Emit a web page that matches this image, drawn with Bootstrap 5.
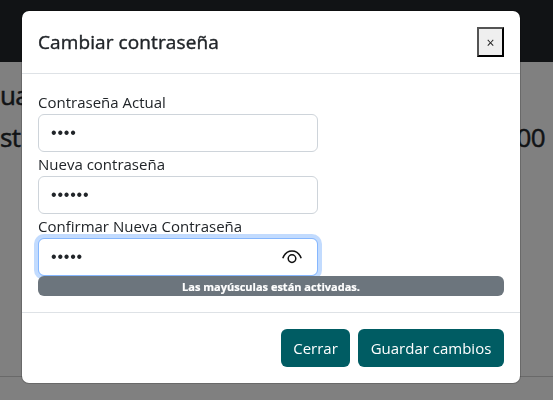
<!DOCTYPE html>
<html lang="es">
<head>
<meta charset="utf-8">
<meta name="viewport" content="width=device-width, initial-scale=1">
<title>Cambiar contraseña</title>
<link href="https://cdn.jsdelivr.net/npm/bootstrap@5.3.0/dist/css/bootstrap.min.css" rel="stylesheet">
<style>
body{font-family:"Open Sans","Noto Sans",sans-serif;height:400px;overflow:hidden;background:#808080}
.topbar{height:62px;background:#111315}
.page-text{height:314px;padding:12px 8px 0 0}
.page-line{height:42px;font-size:26px;line-height:42px;font-weight:500;color:#111315;letter-spacing:-.6px;-webkit-text-stroke:.5px #111315}
.page-rule{height:1px;background:#696969}
.modal-dialog.pw-dialog{width:500px;max-width:500px;margin:10px 0 0 21px}
.modal-content{border-radius:8px}
.pw-title{font-size:19px;line-height:30px;font-weight:500;letter-spacing:.1px;-webkit-text-stroke:.4px #212529}
.close-box{width:27px;height:30px;padding:2px 0 0;border:2px outset #000;background:#efefef;color:#222;font-size:14px;line-height:24px}
.pw-label{font-size:15px;line-height:24px;font-weight:400}
.pw-field{width:280px}
.pw-field .form-control{height:38px;border-color:#ced4da;font-family:"Liberation Sans",sans-serif;font-size:16px;letter-spacing:.8px}
.pw-field.pw-active .form-control{border-color:#86b7fe;box-shadow:0 0 0 4px rgba(13,110,253,.25)}
.eye{right:15px;top:10px;width:22px;height:18px}
.caps{position:relative;height:20px;border-radius:6px;font-size:11px;line-height:22px;padding:0;font-weight:700;-webkit-text-stroke:.2px #fff}
.btn-teal,.btn-teal:hover{height:38px;padding:6px 0;background:#005c63;color:#fff;font-size:15px;border-radius:6px}
.b1{width:69px}.b2{width:146px}
</style>
<script src="https://cdn.jsdelivr.net/npm/bootstrap@5.3.0/dist/js/bootstrap.bundle.min.js"></script>
</head>
<body>
<div class="topbar"></div>
<div class="page-text">
 <div class="page-line"><span>ua</span></div>
 <div class="page-line d-flex justify-content-between"><span>st</span><span>00</span></div>
</div>
<div class="page-rule"></div>
<div class="modal d-block overflow-hidden" tabindex="-1">
 <div class="modal-dialog pw-dialog">
  <div class="modal-content">
   <div class="modal-header p-3">
    <h5 class="modal-title pw-title">Cambiar contraseña</h5>
    <button type="button" class="close-box" aria-label="Cerrar">×</button>
   </div>
   <div class="modal-body p-3">
    <label class="pw-label d-block" for="p1">Contraseña Actual</label>
    <div class="pw-field"><input id="p1" class="form-control" type="text" value="••••" readonly></div>
    <label class="pw-label d-block" for="p2">Nueva contraseña</label>
    <div class="pw-field"><input id="p2" class="form-control" type="text" value="••••••" readonly></div>
    <label class="pw-label d-block" for="p3">Confirmar Nueva Contraseña</label>
    <div class="pw-field pw-active position-relative"><input id="p3" class="form-control" type="text" value="•••••" readonly>
     <svg class="eye position-absolute" viewBox="0 0 22 18" fill="none" stroke="#111" stroke-width="1.5"><path d="M1.8 10.3C3.5 5.6 6.8 3 11 3S18.5 5.6 20.2 10.3"/><circle cx="11" cy="10.6" r="3.8"/></svg>
    </div>
    <div class="badge text-bg-secondary d-block caps">Las mayúsculas están activadas.</div>
   </div>
   <div class="modal-footer d-flex gap-2 p-3">
    <button type="button" class="btn btn-teal border-0 m-0 b1">Cerrar</button>
    <button type="button" class="btn btn-teal border-0 m-0 b2">Guardar cambios</button>
   </div>
  </div>
 </div>
</div>
</body>
</html>
